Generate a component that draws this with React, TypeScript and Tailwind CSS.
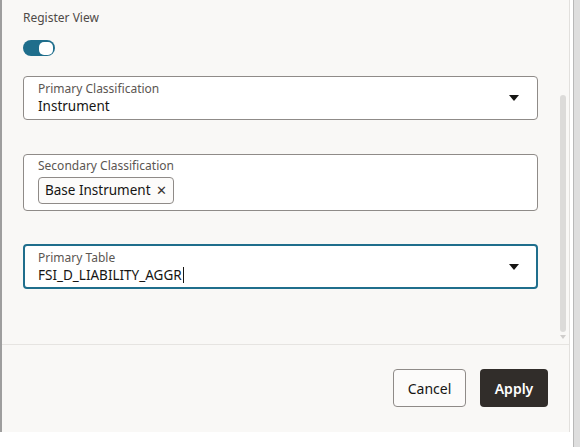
import React from "react";

function Caret() {
  return (
    <svg width="10" height="6" viewBox="0 0 10 6" className="shrink-0">
      <path d="M0 0h10L5 6z" fill="#161513" />
    </svg>
  );
}

export default function App() {
  return (
    <div className="flex h-[447px] w-[580px] bg-white font-['Noto_Sans',sans-serif] text-[#161513]">
      {/* left part: panel + white strip underneath */}
      <div className="flex w-[570px] flex-col">
        <div className="flex h-[432px]">
          <div className="w-[2px] bg-[#9e9e9e]" />
          <div className="flex flex-1 flex-col border-r border-[#e2e0dd] bg-[#f9f8f6]">
            {/* scroll area */}
            <div className="flex h-[344px]">
              <div className="flex-1 pl-[21px] pr-[22px]">
                <div className="mt-[9px] text-[12px] leading-[17px] text-[#4f4a47]">Register View</div>

                {/* toggle */}
                <div className="mt-[14px] flex h-[16px] w-[32px] items-center justify-end rounded-full bg-[#1f6e8c] px-[2px]">
                  <div className="h-[13px] w-[14px] rounded-[5px] bg-white" />
                </div>

                {/* Primary Classification */}
                <div className="mt-[20px] flex h-[44px] items-center rounded-[4px] border border-[#8f8b88] bg-white pl-[14px] pr-[18px]">
                  <div className="flex-1">
                    <div className="text-[12px] leading-[16px] text-[#5b5652]">Primary Classification</div>
                    <div className="text-[13.5px] leading-[18px]">Instrument</div>
                  </div>
                  <Caret />
                </div>

                {/* Secondary Classification */}
                <div className="mt-[34px] h-[57px] rounded-[4px] border border-[#8f8b88] bg-white pl-[14px] pt-[3px]">
                  <div className="text-[12px] leading-[16px] text-[#5b5652]">Secondary Classification</div>
                  <div className="mt-[3px] inline-flex h-[27px] items-center gap-[5px] rounded-[4px] border border-[#8f8b88] bg-[#fcfbfa] pl-[6px] pr-[6px] text-[13.5px]">
                    <span>Base Instrument</span>
                    <span className="text-[13px] text-[#3a3633]">✕</span>
                  </div>
                </div>

                {/* Primary Table (focused) */}
                <div className="mt-[33px] flex h-[45px] items-center rounded-[4px] border-2 border-[#1f6e8c] bg-white pl-[13px] pr-[17px]">
                  <div className="flex-1">
                    <div className="text-[12px] leading-[16px] text-[#5b5652]">Primary Table</div>
                    <div className="flex items-center text-[13.5px] leading-[18px]">
                      FSI_D_LIABILITY_AGGR
                      <span className="ml-[1px] h-[16px] w-px bg-[#161513]" />
                    </div>
                  </div>
                  <Caret />
                </div>
              </div>

              {/* scrollbar */}
              <div className="mr-[3px] flex w-[6px] flex-col items-center pt-[95px]">
                <div className="h-[237px] w-[6px] rounded-full bg-[#dcdbd9]" />
                <svg width="6" height="4" viewBox="0 0 6 4" className="mt-[3px]">
                  <path d="M0 0h6L3 4z" fill="#cfcdcb" />
                </svg>
              </div>
            </div>

            {/* footer */}
            <div className="flex flex-1 items-start justify-end gap-[14px] border-t border-[#e6e4e1] pr-[21px] pt-[24px]">
              <button className="h-[38px] w-[73px] rounded-[4px] border border-[#8f8b88] bg-[#fcfbfa] text-[14px] text-[#161513]">
                Cancel
              </button>
              <button className="h-[38px] w-[68px] rounded-[4px] bg-[#312d2a] text-[14px] font-semibold text-white">
                Apply
              </button>
            </div>
          </div>
        </div>
        <div className="flex-1 bg-white" />
      </div>

      {/* right window edge */}
      <div className="w-[3px] bg-white" />
      <div className="w-[7px] border-l border-[#b8b8b8] bg-[#dedede]" />
    </div>
  );
}
